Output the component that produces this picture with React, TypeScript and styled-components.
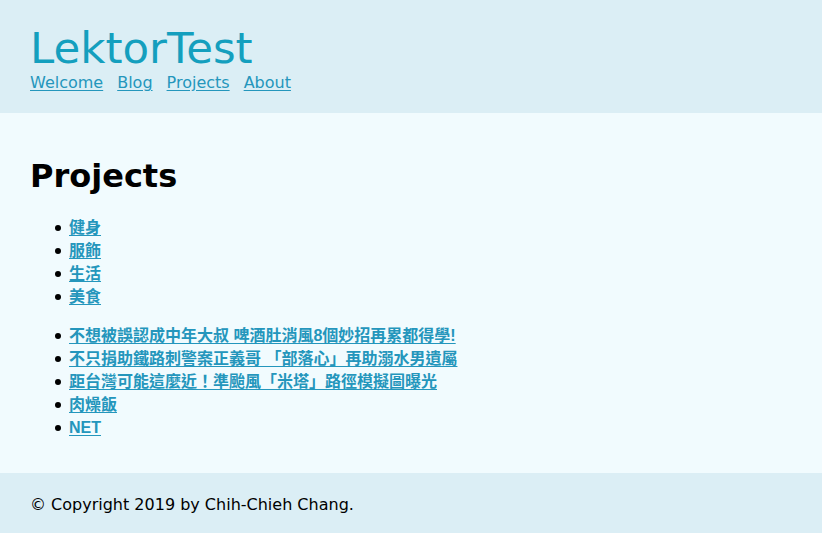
import React from "react";
import styled, { createGlobalStyle } from "styled-components";

const Global = createGlobalStyle`
  html, body { margin: 0; padding: 0; }
  body {
    font-family: "DejaVu Sans", Verdana, "Noto Sans CJK TC", sans-serif;
    font-size: 16px;
    color: #000;
    background: #dbeef5;
  }
`;

const Header = styled.header`
  background: #dbeef5;
  padding: 23px 30px 21px;
`;

const SiteTitle = styled.h1`
  margin: 0;
  font-size: 43.5px;
  font-weight: normal;
  color: #149fbe;
  line-height: normal;
`;

const Nav = styled.nav`
  display: flex;
  gap: 14px;
  font-size: 16px;
`;

const Link = styled.a`
  color: #2496bc;
  text-decoration: underline;
  text-underline-offset: 2px;
`;

const Page = styled.div`
  background: #f1fbfe;
  padding: 23px 30px 18px;
`;

const Title = styled.h1`
  font-size: 32px;
  font-weight: bold;
  margin: 21px 0;
`;

const List = styled.ul`
  margin: 16px 0;
  padding-left: 39px;
  list-style: none;
  font-family: "Liberation Sans", Arial, "Noto Sans CJK TC", sans-serif;
  font-weight: bold;
`;

const Item = styled.li`
  line-height: 23px;
  &::before {
    content: "";
    display: inline-block;
    width: 6.5px;
    height: 6.5px;
    border-radius: 50%;
    background: #000;
    margin-left: -14.5px;
    margin-right: 8px;
    vertical-align: middle;
    position: relative;
    top: -1px;
  }
`;

const Footer = styled.footer`
  background: #dbeef5;
  padding: 22px 30px 20px;
`;

const categories = ["健身", "服飾", "生活", "美食"];
const posts = [
  "不想被誤認成中年大叔 啤酒肚消風8個妙招再累都得學!",
  "不只捐助鐵路刺警案正義哥 「部落心」再助溺水男遺屬",
  "距台灣可能這麼近！準颱風「米塔」路徑模擬圖曝光",
  "肉燥飯",
  "NET",
];

export default function App() {
  return (
    <>
      <Global />
      <Header>
        <SiteTitle>LektorTest</SiteTitle>
        <Nav>
          <Link href="#">Welcome</Link>
          <Link href="#">Blog</Link>
          <Link href="#">Projects</Link>
          <Link href="#">About</Link>
        </Nav>
      </Header>
      <Page>
        <Title>Projects</Title>
        <List>
          {categories.map((c) => (
            <Item key={c}>
              <Link href="#">{c}</Link>
            </Item>
          ))}
        </List>
        <List>
          {posts.map((p) => (
            <Item key={p}>
              <Link href="#">{p}</Link>
            </Item>
          ))}
        </List>
      </Page>
      <Footer>© Copyright 2019 by Chih-Chieh Chang.</Footer>
    </>
  );
}
